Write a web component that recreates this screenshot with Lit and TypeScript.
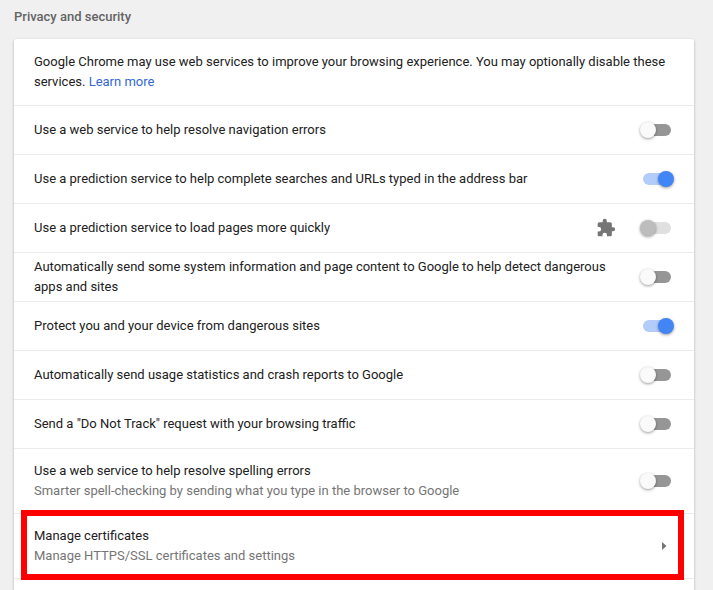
import { LitElement, html, css, nothing } from "lit";
import { customElement, property } from "lit/decorators.js";

@customElement("toggle-switch")
class ToggleSwitch extends LitElement {
  @property({ type: Boolean, reflect: true }) on = false;
  @property({ type: Boolean, reflect: true }) disabled = false;

  static styles = css`
    :host { display: block; position: relative; width: 28px; height: 12px; margin: 0 3px; flex: none; }
    .bar { width: 28px; height: 12px; border-radius: 6px; background: #969696; }
    .knob { position: absolute; left: -3px; top: -2px; width: 16px; height: 16px; border-radius: 50%; background: #fafafa; box-shadow: 0 1px 3px rgba(0,0,0,.4); }
    :host([on]) .bar { background: #b3cdfb; }
    :host([on]) .knob { left: 15px; background: #4285f4; }
    :host([disabled]) .bar { background: #e0e0e0; }
    :host([disabled]) .knob { background: #bdbdbd; }
  `;

  render() {
    return html`<div class="bar"></div><div class="knob"></div>`;
  }
}

interface Row {
  label: string;
  note?: string;
  on?: boolean;
  managed?: boolean;
}

const rows: Row[] = [
  { label: "Use a web service to help resolve navigation errors" },
  { label: "Use a prediction service to help complete searches and URLs typed in the address bar", on: true },
  { label: "Use a prediction service to load pages more quickly", managed: true },
  { label: "Automatically send some system information and page content to Google to help detect dangerous apps and sites" },
  { label: "Protect you and your device from dangerous sites", on: true },
  { label: "Automatically send usage statistics and crash reports to Google" },
  { label: "Send a \"Do Not Track\" request with your browsing traffic" },
  { label: "Use a web service to help resolve spelling errors", note: "Smarter spell-checking by sending what you type in the browser to Google" },
];

@customElement("app-root")
class AppRoot extends LitElement {
  static styles = css`
    :host { display: block; height: 590px; overflow: hidden; background: #f0f0f0; font: 13px/20px Roboto, sans-serif; color: #212121; box-sizing: border-box; padding: 7px 19px 0 14px; }
    h2 { margin: 0 0 12px; font-size: 13px; line-height: 20px; font-weight: 500; color: #646464; }
    .card { background: #fff; border-radius: 2px; height: 600px; box-shadow: 0 1px 3px rgba(0,0,0,.28); }
    .row { display: flex; align-items: center; box-sizing: border-box; min-height: 49px; padding: 0 20px; border-top: 1px solid #ebebeb; }
    .intro { display: block; height: 66px; padding-top: 13px; border-top: 0; }
    .double { min-height: 65px; }
    .text { flex: 1; max-width: 586px; margin-right: auto; }
    .note { color: #757575; }
    .link { color: #3367d6; }
    .puzzle { width: 20px; height: 20px; margin-right: 24px; fill: #757575; flex: none; }
    .certs { position: relative; }
    .frame { position: absolute; left: 7px; top: -4px; width: 663px; height: 70px; box-sizing: border-box; border: 6px solid #ff0000; }
    .arrow { width: 5px; height: 8px; margin-right: 7px; fill: #757575; }
  `;

  render() {
    return html`
      <h2>Privacy and security</h2>
      <div class="card">
        <div class="row intro">
          Google Chrome may use web services to improve your browsing experience. You may optionally disable these services. <span class="link">Learn more</span>
        </div>
        ${rows.map((r) => html`
          <div class="row ${r.note ? "double" : ""}">
            <div class="text">${r.label}${r.note ? html`<div class="note">${r.note}</div>` : nothing}</div>
            ${r.managed ? html`<svg class="puzzle" viewBox="0 0 24 24"><path d="M20.5 11H19V7c0-1.1-.9-2-2-2h-4V3.5a2.5 2.5 0 0 0-5 0V5H4c-1.1 0-2 .9-2 2v3.8h1.5a2.7 2.7 0 0 1 0 5.4H2V20c0 1.1.9 2 2 2h3.8v-1.5a2.7 2.7 0 0 1 5.4 0V22H17c1.1 0 2-.9 2-2v-4h1.5a2.5 2.5 0 0 0 0-5z"/></svg>` : nothing}
            <toggle-switch ?on=${r.on} ?disabled=${r.managed}></toggle-switch>
          </div>`)}
        <div class="row double certs">
          <div class="text">Manage certificates<div class="note">Manage HTTPS/SSL certificates and settings</div></div>
          <svg class="arrow" viewBox="0 0 5 8"><path d="M0 0l4.5 4L0 8z"/></svg>
          <div class="frame"></div>
        </div>
        <div class="row"></div>
      </div>
    `;
  }
}
